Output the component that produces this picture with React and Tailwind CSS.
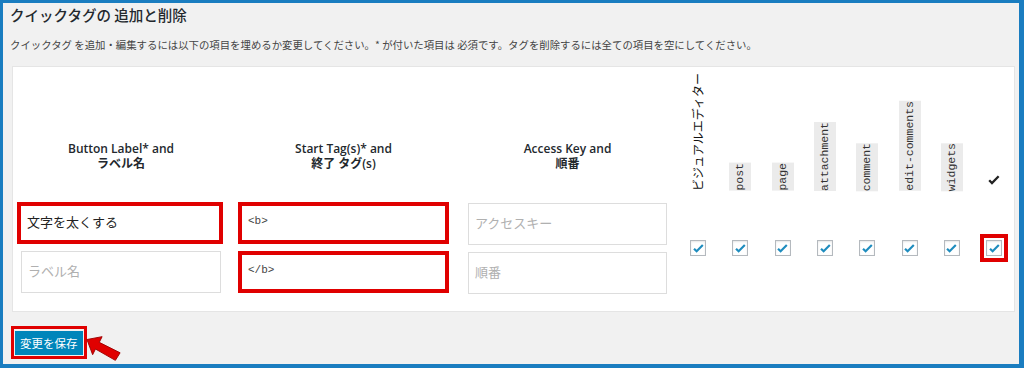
import React from 'react';

const jp = "font-['Open_Sans','Noto_Sans_CJK_JP',sans-serif]";
const mono = "font-['Liberation_Mono','DejaVu_Sans_Mono',monospace]";

const roles = ['post', 'page', 'attachment', 'comment', 'edit-comments', 'widgets'];

function Check({ boxed }) {
  const box = (
    <span className="w-[16px] h-[16px] border border-[#b4b9be] bg-white shadow-[inset_0_1px_2px_rgba(0,0,0,0.1)] flex items-center justify-center">
      <svg viewBox="0 0 16 16" className="w-[13px] h-[13px]">
        <path d="M2.5 8.2l3.2 3.3 7.6-7.8" stroke="#1e8cbe" strokeWidth="2.6" fill="none" />
      </svg>
    </span>
  );
  if (!boxed) return box;
  return (
    <span className="w-[28px] h-[28px] border-[4px] border-[#e00000] flex items-center justify-center">{box}</span>
  );
}

function Field({ value, placeholder, red, code, w }) {
  return (
    <div
      className={`h-[42px] bg-white ${w} ${
        red ? 'border-[4px] border-[#e00000]' : 'border border-[#dddddd]'
      } flex ${code ? 'items-start pt-[7px] pl-[6px]' : 'items-center pl-[6px]'} ${
        code ? mono + ' text-[11px] text-[#444]' : jp + ' text-[13px]'
      } ${value ? 'text-[#222]' : 'text-[#b0b0b0]'}`}
    >
      {value || placeholder}
    </div>
  );
}

export default function App() {
  return (
    <div className={`w-[1024px] h-[368px] border-l-[3px] border-t-[3px] border-r-[5px] border-b-[4px] border-[#1a7dc0] bg-[#f1f1f1] ${jp} text-[#333]`}>
      {/* Title */}
      <div className="h-[24px] leading-[24px] pl-[7px] text-[14.5px] font-medium text-[#23282d] font-['Noto_Sans_CJK_JP',sans-serif]">
        クイックタグの 追加と削除
      </div>
      <div className="mt-[8px] h-[20px] leading-[20px] pl-[7px] text-[10.4px] text-[#444] font-['Noto_Sans_CJK_JP',sans-serif]">
        クイックタグ を追加・編集するには以下の項目を埋めるか変更してください。* が付いた項目は 必須です。タグを削除するには全ての項目を空にしてください。
      </div>

      {/* Panel */}
      <div className="mt-[11px] ml-[9px] w-[1003px] h-[246px] bg-white border border-[#e5e5e5]">
        <div className="grid grid-cols-[216px_229px_219px_repeat(8,42.3px)]">
          {/* header row */}
          <div className="h-[132px] flex items-end justify-center pb-[28px] text-center text-[12px] leading-[15px] font-semibold text-[#23282d]">
            <div>Button Label* and<br />ラベル名</div>
          </div>
          <div className="h-[132px] flex items-end justify-center pb-[28px] text-center text-[12px] leading-[15px] font-semibold text-[#23282d]">
            <div>Start Tag(s)* and<br />終了 タグ(s)</div>
          </div>
          <div className="h-[132px] flex items-end justify-center pb-[28px] text-center text-[12px] leading-[15px] font-semibold text-[#23282d]">
            <div>Access Key and<br />順番</div>
          </div>
          <div className="h-[132px] flex items-end justify-center pb-[8px]">
            <span className="[writing-mode:vertical-rl] [text-orientation:sideways] rotate-180 text-[12px] leading-[14px] text-[#111] font-['Noto_Sans_CJK_JP',sans-serif]">
              ビジュアルエディター
            </span>
          </div>
          {roles.map((r) => (
            <div key={r} className="h-[132px] flex items-end justify-center pb-[8px]">
              <span className={`[writing-mode:vertical-rl] rotate-180 bg-[#ebebeb] py-[4px] text-[11.5px] leading-[14px] text-[#333] ${mono}`}>
                {r}
              </span>
            </div>
          ))}
          <div className="h-[132px] flex items-end justify-center pb-[8px]">
            <svg viewBox="0 0 16 16" className="w-[14px] h-[14px] mb-[4px]">
              <path d="M2.5 8.2l3.2 3.3 7.6-7.8" stroke="#222" strokeWidth="2.6" fill="none" />
            </svg>
          </div>

          {/* inputs row */}
          <div className="pt-[3px] pl-[4px] flex flex-col gap-[7px]">
            <Field value="文字を太くする" red w="w-[206px]" />
            <div className="pl-[4px]">
              <Field placeholder="ラベル名" w="w-[200px]" />
            </div>
          </div>
          <div className="pt-[3px] pl-[9px] flex flex-col gap-[7px]">
            <Field value="<b>" code red w="w-[211px]" />
            <Field value="</b>" code red w="w-[211px]" />
          </div>
          <div className="pt-[4px] pl-[10px] flex flex-col gap-[7px]">
            <Field placeholder="アクセスキー" w="w-[199px]" />
            <Field placeholder="順番" w="w-[199px]" />
          </div>
          {[0, 1, 2, 3, 4, 5, 6, 7].map((i) => (
            <div key={i} className="flex items-center justify-center pt-[3px]">
              <Check boxed={i === 7} />
            </div>
          ))}
        </div>
      </div>

      {/* Save */}
      <div className="mt-[14px] ml-[8px] flex items-start">
        <div className="border-[3px] border-[#e00000] p-[1px]">
          <button className="h-[24px] px-[5px] bg-[#0085ba] text-white text-[11.5px] leading-[24px] font-['Noto_Sans_CJK_JP',sans-serif]">
            変更を保存
          </button>
        </div>
        <svg viewBox="0 0 38 28" className="w-[36px] h-[28px] mt-[9px] -ml-[1px]">
          <polygon points="1,4 17,1 14,7 36,18 31,26 10,14 7,20" fill="#e00000" stroke="#a00000" strokeWidth="1" strokeLinejoin="round" />
        </svg>
      </div>
    </div>
  );
}
